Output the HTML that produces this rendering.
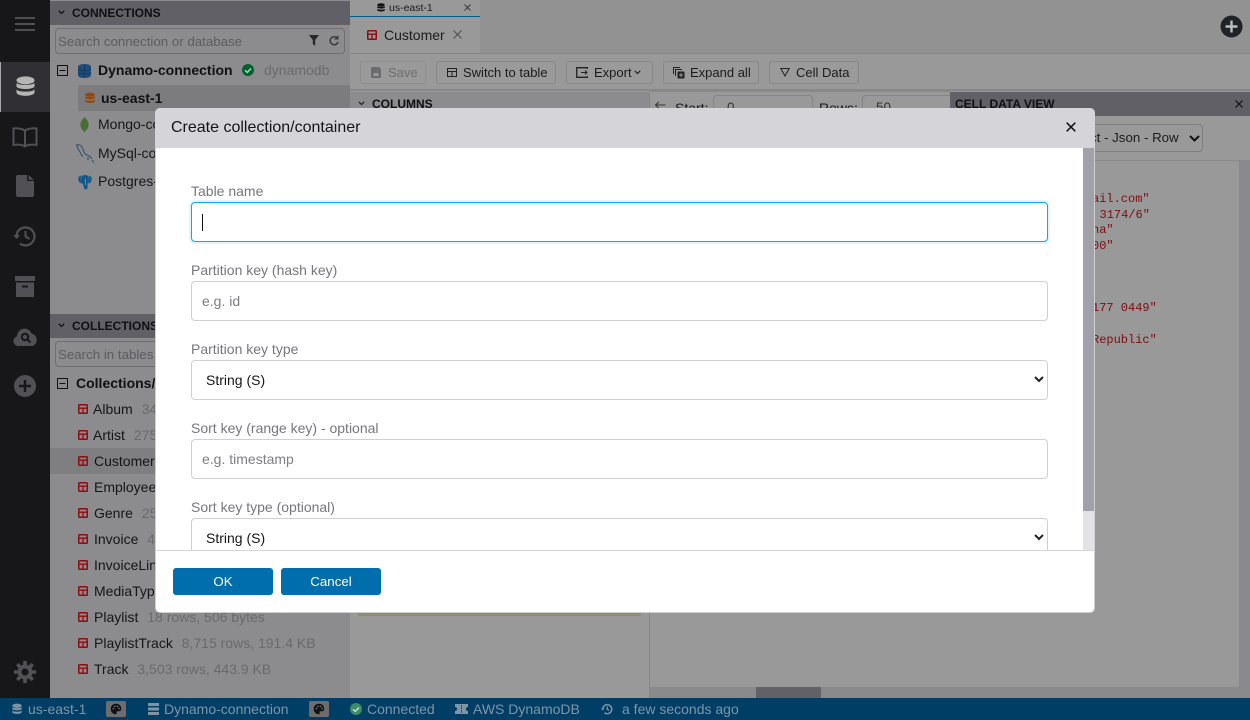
<!DOCTYPE html>
<html lang="en"><head><meta charset="utf-8"><title>Create collection</title>
<style>
html,body{margin:0;padding:0;width:1250px;height:720px;overflow:hidden;background:#999;font-family:"Liberation Sans",sans-serif;font-size:14px;color:#151518}
*{box-sizing:border-box}
.a,.t{position:absolute}
.t{white-space:nowrap;line-height:20px;height:20px}
svg{position:absolute;display:block}
.g{color:#6a696d;margin-left:5px}
.tb{position:absolute;height:23px;top:61px;border:1px solid #878789;border-radius:3px;background:#9a9a9a;font-size:13px;line-height:21px;color:#1b1b1e;white-space:nowrap}
.lb{position:absolute;left:191px;color:#77767e;font-size:14px;line-height:20px;white-space:nowrap}
.in{position:absolute;left:191px;width:857px;height:40px;border:1px solid #d0d0d3;border-radius:4px;background:#fff;color:#7d7d84;font-size:14px;line-height:38px;padding-left:10px}
.sel{color:#17171a;padding-left:14px}
.btn{position:absolute;top:568px;width:100px;height:27px;background:#006dac;border-radius:3px;color:#fff;font-size:13.300px;line-height:27px;text-align:center}
.sb{position:absolute;top:698px;height:22px;line-height:22px;color:#7f95a5;font-size:14px;white-space:nowrap}
.pal{position:absolute;top:701px;width:20px;height:16px;background:#6d6d70;border-radius:2px}
.m{position:absolute;font-family:"Liberation Mono",monospace;font-size:12px;line-height:16px;color:#7d0d12;white-space:nowrap;left:1092px}
</style></head><body>
<svg width="0" height="0" style="position:absolute"><defs>
<symbol id="tbl" viewBox="0 0 10 10"><rect x=".75" y=".75" width="8.500" height="8.500" rx=".8" fill="none" stroke="#8f0c12" stroke-width="1.500"/><path d="M.7 4.200h8.600M5 4.200v5" stroke="#8f0c12" stroke-width="1.300" fill="none"/></symbol>
<symbol id="db" viewBox="0 0 20 22"><ellipse cx="10" cy="4.500" rx="9.500" ry="4.200" fill="currentColor"/><path d="M.5 7.200C2 10 18 10 19.500 7.200V11C18 14.500 2 14.500.5 11zM.5 14C2 17.200 18 17.200 19.500 14V17.500C18 22 2 22 .5 17.500z" fill="currentColor"/></symbol>
<symbol id="pal" viewBox="0 0 16 16"><path d="M8 1C3.800 1 1 4 1 8s3 7 6.500 7c1.500 0 1.800-1 1.300-2-.5-1 0-2 1.200-2h2.500C14 11 15 9.500 15 7.500 15 3.500 12 1 8 1z" fill="#111"/><circle cx="4.500" cy="7.500" r="1.200" fill="#6d6d70"/><circle cx="6.500" cy="4.500" r="1.200" fill="#6d6d70"/><circle cx="10" cy="4.500" r="1.200" fill="#6d6d70"/><circle cx="12.300" cy="7.300" r="1.200" fill="#6d6d70"/></symbol>
</defs></svg>

<!-- left rail -->
<div class="a" style="left:0;top:0;width:50px;height:698px;background:#17171a"></div>
<div class="a" style="left:0;top:62px;width:50px;height:50px;background:#2f2f34;border-left:1px solid #a8a8aa"></div>
<svg style="left:15px;top:17px" width="20" height="15"><path d="M0 1h20M0 7h20M0 13h20" stroke="#505054" stroke-width="2"/></svg>
<svg style="left:16px;top:76px;color:#b5b5b3" width="19" height="21"><use href="#db"/></svg>
<svg style="left:12px;top:127px" width="26" height="21" viewBox="0 0 26 21"><path d="M13 3.500C10 1.500 5 1 1.500 1.500V18C5 17.500 10 17.500 13 19.500 16 17.500 21 17.500 24.500 18V1.500C21 1 16 1.500 13 3.500zM13 3.500V19.500" fill="none" stroke="#505055" stroke-width="2"/></svg>
<svg style="left:16px;top:175px" width="18" height="22" viewBox="0 0 18 22"><path d="M2 0h9v6h7v14a2 2 0 0 1-2 2H2a2 2 0 0 1-2-2V2a2 2 0 0 1 2-2zM12.500 0L18 4.800h-5.500z" fill="#505055"/></svg>
<svg style="left:13px;top:225px" width="24" height="22" viewBox="0 0 24 22"><path d="M3.500 11A9 9 0 1 1 7 18.500" fill="none" stroke="#505055" stroke-width="2.200"/><path d="M0 10l3.500 4 3.500-4z" fill="#505055"/><path d="M12.500 6v5.500l4 2.500" fill="none" stroke="#505055" stroke-width="2"/></svg>
<svg style="left:15px;top:276px" width="20" height="21" viewBox="0 0 20 21"><path d="M0 0h20v5H0zM1 6.500h18V21H1z" fill="#505055"/><path d="M7 10.500h6" stroke="#17171a" stroke-width="2"/></svg>
<svg style="left:13px;top:327px" width="25" height="20" viewBox="0 0 25 20"><path d="M5 19a5 5 0 0 1-1-9.800A7.500 7.500 0 0 1 18.500 6.500 6.500 6.500 0 0 1 19.500 19z" fill="#505055"/><circle cx="12" cy="10" r="3.200" fill="none" stroke="#17171a" stroke-width="2"/><path d="M14.500 12.500l3 3" stroke="#17171a" stroke-width="2"/></svg>
<svg style="left:14px;top:375px" width="22" height="22" viewBox="0 0 22 22"><circle cx="11" cy="11" r="11" fill="#505055"/><path d="M11 5v12M5 11h12" stroke="#17171a" stroke-width="2.400"/></svg>
<svg style="left:14px;top:661px" width="22" height="22" viewBox="0 0 22 22"><circle cx="11" cy="11" r="5.500" fill="none" stroke="#505055" stroke-width="4"/><path d="M11 0v4M11 18v4M0 11h4M18 11h4M3.200 3.200l3 3M15.800 15.800l3 3M18.800 3.200l-3 3M6.200 15.800l-3 3" stroke="#505055" stroke-width="3.600"/></svg>

<!-- left panel -->
<div class="a" style="left:50px;top:0;width:300px;height:698px;background:#8c8c8e"></div>
<div class="a" style="left:50px;top:1px;width:300px;height:24px;background:#616066"></div>
<svg style="left:58px;top:10px" width="7" height="5"><path d="M.8.800L3.500 3.500 6.200.800" fill="none" stroke="#111" stroke-width="1.300"/></svg>
<div class="t" style="left:72px;top:3px;font-size:12px;font-weight:700;color:#101013">CONNECTIONS</div>
<div class="a" style="left:55px;top:28px;width:290px;height:26px;border:1px solid #6f6f72;border-radius:4px"></div>
<div class="t" style="left:58px;top:32px;font-size:13.300px;color:#5d5c62">Search connection or database</div>
<svg style="left:309px;top:35px" width="10" height="11"><path d="M0 0h10L6.200 5V11L3.800 9V5z" fill="#27272a"/></svg>
<svg style="left:329px;top:35px" width="10" height="11" viewBox="0 0 10 11"><path d="M8.500 3.500A4 4 0 1 0 9 7" fill="none" stroke="#3a3a3d" stroke-width="1.500"/><path d="M9.500 0v4.500H5z" fill="#3a3a3d"/></svg>

<svg style="left:57px;top:65px" width="11" height="11"><rect x=".5" y=".5" width="10" height="10" fill="none" stroke="#111" /><path d="M2.500 5.500h6" stroke="#111"/></svg>
<svg style="left:78px;top:64px" width="13" height="14" viewBox="0 0 13 14"><path d="M6.500 0C10 0 13 1 13 3V11C13 13 10 14 6.500 14S0 13 0 11V3C0 1 3 0 6.500 0z" fill="#1f4c78"/><path d="M0 5C2 7 11 7 13 5M0 8.500C2 10.500 11 10.500 13 8.500M6.500 2V13" fill="none" stroke="#16365a" stroke-width=".8"/></svg>
<div class="t" style="left:98px;top:60px;font-weight:700;color:#111114">Dynamo-connection</div>
<svg style="left:242px;top:64px" width="12" height="12" viewBox="0 0 12 12"><circle cx="6" cy="6" r="6" fill="#05602f"/><path d="M3 6.200l2.200 2.200L9 4.500" fill="none" stroke="#9db" stroke-width="1.500"/></svg>
<div class="t g" style="left:264px;top:60px;margin-left:0">dynamodb</div>
<div class="a" style="left:78px;top:85px;width:272px;height:26px;background:#7c7c7e"></div>
<svg style="left:85px;top:92px;color:#974609" width="10" height="12"><use href="#db"/></svg>
<div class="t" style="left:101px;top:88px;font-weight:700;color:#111114">us-east-1</div>
<svg style="left:80px;top:117px" width="9" height="16" viewBox="0 0 9 16"><path d="M4.500 0C7.500 3 9 6 8.500 9 8 12 6 13.500 5 14.500L4.500 16 4 14.500C3 13.500 1 12 .5 9 0 6 1.500 3 4.500 0z" fill="#466f34"/></svg>
<div class="t" style="left:98px;top:114px;color:#17171a">Mongo-connection</div>
<svg style="left:75px;top:144px" width="20" height="19" viewBox="0 0 20 19"><path d="M1 1C3 .5 5.500 1 7 3 9 5.500 8 9 11 10.500 13 11.500 16 12 16.500 15M2 1.500C2 4 3 5 4.500 7 5.500 9 6 11 8 12.500M17 16l2 2.500M13 13v3" fill="none" stroke="#264d6d" stroke-width="1"/></svg>
<div class="t" style="left:98px;top:143px;color:#17171a">MySql-connection</div>
<svg style="left:78px;top:174px" width="14" height="16" viewBox="0 0 14 16"><path d="M7 1C10 1 11.500 3 11 6 10.800 8 10 9 9.500 10V14.500L7.500 15.500C6 15 5.500 13 5.500 11 4.500 10 3 8 3 6 2.500 3 4 1 7 1z" fill="#11598a"/><path d="M3.300 1.500C1.300 1.500 0 3.500 .3 5.500 .6 7.500 1.500 9 3.200 9.500 3.900 9.700 3.500 8 2.900 6.500 2.300 4.500 2.700 3 3.300 1.500zM10.700 1.500C12.700 1.500 14 3.500 13.700 5.500 13.400 7.500 12.500 9 10.800 9.500 10.100 9.700 10.500 8 11.100 6.500 11.700 4.500 11.300 3 10.700 1.500z" fill="#11598a"/><path d="M7.500 4.500V11" stroke="#8c8c8e" stroke-width=".8"/></svg>
<div class="t" style="left:98px;top:171px;color:#17171a">Postgres-connection</div>

<div class="a" style="left:50px;top:314px;width:300px;height:24px;background:#616066"></div>
<svg style="left:58px;top:323px" width="7" height="5"><path d="M.8.800L3.500 3.500 6.200.800" fill="none" stroke="#111" stroke-width="1.300"/></svg>
<div class="t" style="left:72px;top:316px;font-size:12px;font-weight:700;color:#101013">COLLECTIONS</div>
<div class="a" style="left:55px;top:341px;width:295px;height:26px;border:1px solid #6f6f72;border-radius:4px 0 0 4px"></div>
<div class="t" style="left:58px;top:345px;font-size:13.300px;color:#5d5c62">Search in tables</div>
<svg style="left:57px;top:378px" width="11" height="11"><rect x=".5" y=".5" width="10" height="10" fill="none" stroke="#111"/><path d="M2.500 5.500h6" stroke="#111"/></svg>
<div class="t" style="left:76px;top:373px;font-weight:700;color:#111114">Collections/containers</div>
<div class="a" style="left:50px;top:448px;width:300px;height:26px;background:#7f7f81"></div>
<svg style="left:78px;top:404px" width="10" height="10"><use href="#tbl"/></svg><div class="t" style="left:93px;top:399px">Album <span class="g">347 rows</span></div>
<svg style="left:78px;top:430px" width="10" height="10"><use href="#tbl"/></svg><div class="t" style="left:93px;top:425px">Artist <span class="g">275 rows</span></div>
<svg style="left:78px;top:456px" width="10" height="10"><use href="#tbl"/></svg><div class="t" style="left:94px;top:451px">Customer</div>
<svg style="left:78px;top:482px" width="10" height="10"><use href="#tbl"/></svg><div class="t" style="left:94px;top:477px">Employee</div>
<svg style="left:78px;top:508px" width="10" height="10"><use href="#tbl"/></svg><div class="t" style="left:94px;top:503px">Genre <span class="g">25 rows</span></div>
<svg style="left:78px;top:534px" width="10" height="10"><use href="#tbl"/></svg><div class="t" style="left:94px;top:529px">Invoice <span class="g">412 rows</span></div>
<svg style="left:78px;top:560px" width="10" height="10"><use href="#tbl"/></svg><div class="t" style="left:94px;top:555px">InvoiceLine</div>
<svg style="left:78px;top:586px" width="10" height="10"><use href="#tbl"/></svg><div class="t" style="left:94px;top:581px">MediaType</div>
<svg style="left:78px;top:612px" width="10" height="10"><use href="#tbl"/></svg><div class="t" style="left:94px;top:607px">Playlist <span class="g">18 rows, 506 bytes</span></div>
<svg style="left:78px;top:638px" width="10" height="10"><use href="#tbl"/></svg><div class="t" style="left:94px;top:633px">PlaylistTrack <span class="g">8,715 rows, 191.4 KB</span></div>
<svg style="left:78px;top:664px" width="10" height="10"><use href="#tbl"/></svg><div class="t" style="left:94px;top:659px">Track <span class="g">3,503 rows, 443.9 KB</span></div>

<!-- main area -->
<div class="a" style="left:350px;top:0;width:900px;height:54px;background:#929292;border-bottom:1px solid #858587"></div>
<div class="a" style="left:350px;top:0;width:130px;height:17px;background:#999;border-bottom:1px solid #045c8e"></div>
<svg style="left:377px;top:3px;color:#111" width="8" height="9"><use href="#db"/></svg>
<div class="t" style="left:389px;top:-2px;font-size:10.500px;color:#1b1b1e">us-east-1</div>
<svg style="left:464px;top:4px" width="7" height="7"><path d="M.5.500l6 6M6.500.500l-6 6" stroke="#333" stroke-width=".9"/></svg>
<div class="a" style="left:350px;top:17px;width:130px;height:36px;background:#999"></div>
<svg style="left:367px;top:30px" width="10" height="10"><use href="#tbl"/></svg>
<div class="t" style="left:384px;top:25px;color:#1b1b1e">Customer</div>
<svg style="left:453px;top:30px" width="9" height="9"><path d="M.5.500l8 8M8.500.500l-8 8" stroke="#4a4a4d" stroke-width="1"/></svg>
<svg style="left:1220px;top:15px" width="23" height="23" viewBox="0 0 23 23"><circle cx="11.500" cy="11.500" r="11" fill="#1f2226"/><path d="M11.500 5.500v12M5.500 11.500h12" stroke="#bbb" stroke-width="2.400"/></svg>

<div class="a" style="left:350px;top:54px;width:900px;height:37px;background:#999;border-bottom:2px solid #878789"></div>
<div class="tb" style="left:360px;width:66px;padding-left:27px;color:#6f6f72;border-color:#8d8d8f">Save</div>
<svg style="left:371px;top:67px" width="10" height="11"><path d="M0 1a1 1 0 0 1 1-1h7l2 2v8a1 1 0 0 1-1 1H1a1 1 0 0 1-1-1z" fill="#6b6b6e"/><rect x="2.500" y="6" width="5" height="3" fill="#999"/></svg>
<div class="tb" style="left:436px;width:120px;padding-left:26px">Switch to table</div>
<svg style="left:447px;top:68px" width="10" height="9"><rect x=".5" y=".5" width="9" height="8" fill="none" stroke="#222"/><path d="M.5 3.500h9M5 3v5" stroke="#222"/></svg>
<div class="tb" style="left:566px;width:87px;padding-left:27px">Export</div>
<svg style="left:576px;top:67px" width="12" height="11"><path d="M11.500 2V.7H.7v9.600h10.800V9" fill="none" stroke="#222" stroke-width="1.300"/><path d="M5 5.500h6M9 3.500l2 2-2 2" fill="none" stroke="#222"/></svg>
<svg style="left:634px;top:70px" width="7" height="5"><path d="M.8.800L3.500 3.500 6.200.800" fill="none" stroke="#222" stroke-width="1.200"/></svg>
<div class="tb" style="left:663px;width:96px;padding-left:26px">Expand all</div>
<svg style="left:673px;top:67px" width="12" height="12"><path d="M.5 7V.5H7M2.500 9V2.500H9" fill="none" stroke="#222"/><rect x="4.500" y="4.500" width="7" height="7" rx="1" fill="#222"/><path d="M8 6v4M6 8h4" stroke="#999"/></svg>
<div class="tb" style="left:769px;width:90px;padding-left:26px">Cell Data</div>
<svg style="left:780px;top:68px" width="10" height="9"><path d="M.8.500h8.400L5 8z" fill="none" stroke="#222"/></svg>

<div class="a" style="left:350px;top:92px;width:300px;height:24px;background:#8c8c8e"></div>
<svg style="left:358px;top:101px" width="7" height="5"><path d="M.8.800L3.500 3.500 6.200.800" fill="none" stroke="#222" stroke-width="1.200"/></svg>
<div class="t" style="left:372px;top:94px;font-size:12px;font-weight:700;color:#101013">COLUMNS</div>
<div class="a" style="left:649px;top:92px;width:1px;height:606px;background:#858587"></div>
<div class="a" style="left:650px;top:90px;width:300px;height:2px;background:#888"></div>
<svg style="left:654px;top:101px" width="12" height="8"><path d="M11.500 4H1.500M5 .8L1.500 4 5 7.200" fill="none" stroke="#333" stroke-width="1"/></svg>
<div class="t" style="left:675px;top:98px;color:#1b1b1e">Start:</div>
<div class="a" style="left:713px;top:95px;width:100px;height:30px;border:1px solid #858587;border-radius:4px;padding:4px 13px;font-size:13.500px;color:#333">0</div>
<div class="t" style="left:819px;top:98px;color:#1b1b1e">Rows:</div>
<div class="a" style="left:862px;top:95px;width:88px;height:30px;border:1px solid #858587;border-right:0;border-radius:4px 0 0 4px;padding:4px 13px;font-size:13.500px;color:#333">50</div>
<div class="a" style="left:650px;top:687px;width:600px;height:11px;background:#8a8a8c"></div>
<div class="a" style="left:756px;top:687px;width:65px;height:11px;background:#626167"></div>
<div class="a" style="left:358px;top:612px;width:283px;height:4px;background:#8e8c6e;border-radius:0 0 2px 2px"></div>

<!-- cell data -->
<div class="a" style="left:950px;top:92px;width:300px;height:24px;background:#616066"></div>
<div class="t" style="left:955px;top:94px;font-size:12px;font-weight:700;color:#101013">CELL DATA VIEW</div>
<svg style="left:1235px;top:100px" width="8" height="8"><path d="M.5.500l7 7M7.500.500l-7 7" stroke="#111" stroke-width="1.200"/></svg>
<div class="a" style="left:1090px;top:124px;width:113px;height:28px;border:1px solid #7f7f81;border-radius:4px"></div>
<div class="t" style="left:1090px;top:128px;font-size:13.300px;color:#1b1b1e">ct - Json - Row</div>
<svg style="left:1189px;top:135px" width="11" height="7"><path d="M1 1l4.500 4.500L10 1" fill="none" stroke="#111" stroke-width="2"/></svg>
<div class="a" style="left:950px;top:160px;width:300px;height:1px;background:#8a8a8c"></div>
<div class="a" style="left:1239px;top:161px;width:11px;height:537px;background:#8a8a8c"></div>
<div class="m" style="top:191px">ail.com"</div>
<div class="m" style="top:207px;left:1099.500px">3174/6"</div>
<div class="m" style="top:222px">na"</div>
<div class="m" style="top:238px">00"</div>
<div class="m" style="top:300px">177 0449"</div>
<div class="m" style="top:332px">Republic"</div>

<!-- status bar -->
<div class="a" style="left:0;top:698px;width:1250px;height:22px;background:#003e66"></div>
<svg style="left:12px;top:703px;color:#7f95a5" width="10" height="12"><use href="#db"/></svg>
<div class="sb" style="left:28px">us-east-1</div>
<div class="pal" style="left:106px"></div>
<svg style="left:110px;top:703px" width="12" height="12"><use href="#pal"/></svg>
<svg style="left:148px;top:703px" width="11" height="12"><path d="M0 0h11v3H0zM0 4.500h11v3H0zM0 9h11v3H0z" fill="#7f95a5"/></svg>
<div class="sb" style="left:164px">Dynamo-connection</div>
<div class="pal" style="left:309px"></div>
<svg style="left:313px;top:703px" width="12" height="12"><use href="#pal"/></svg>
<svg style="left:350px;top:703px" width="12" height="12" viewBox="0 0 12 12"><circle cx="6" cy="6" r="6" fill="#3d8c63"/><path d="M3 6.200l2.200 2.200L9 4.500" fill="none" stroke="#cde" stroke-width="1.400"/></svg>
<div class="sb" style="left:367px">Connected</div>
<svg style="left:455px;top:704px" width="13" height="10"><path d="M0 0h13v3a2 2 0 0 0 0 4v3H0V7a2 2 0 0 0 0-4z" fill="#7f95a5"/><path d="M6.500 1v8" stroke="#003e66" stroke-dasharray="1.500 1"/></svg>
<div class="sb" style="left:473px">AWS DynamoDB</div>
<svg style="left:601px;top:703px" width="12" height="12" viewBox="0 0 24 22"><path d="M3.500 11A9 9 0 1 1 7 18.500" fill="none" stroke="#7f95a5" stroke-width="3"/><path d="M0 10l3.500 4 3.500-4z" fill="#7f95a5"/><path d="M12.500 6v5.500l4 2.500" fill="none" stroke="#7f95a5" stroke-width="2.600"/></svg>
<div class="sb" style="left:622px">a few seconds ago</div>

<!-- modal -->
<div class="a" style="left:155px;top:108px;width:940px;height:505px;background:#fff;border-radius:5px;overflow:hidden;border:1px solid #cfcfd2;border-top:0"></div>
<div class="a" style="left:155px;top:108px;width:940px;height:40px;background:#d5d4d9;border-radius:5px 5px 0 0"></div>
<div class="t" style="left:171px;top:118px;font-size:16px;color:#151518">Create collection/container</div>
<svg style="left:1066px;top:122px" width="10" height="10"><path d="M.7.700l8.600 8.600M9.300.700L.7 9.300" stroke="#111" stroke-width="1.500"/></svg>
<div class="a" style="left:1083px;top:148px;width:11px;height:402px;background:#e3e3e6"></div>
<div class="a" style="left:1083px;top:148px;width:11px;height:363px;background:#a1a1aa"></div>
<div class="lb" style="top:181px">Table name</div>
<div class="in" style="top:202px;border:1px solid #0aa8ec;box-shadow:0 0 0 2px #e3f4fd"></div>
<div class="a" style="left:202px;top:214px;width:1px;height:17px;background:#111"></div>
<div class="lb" style="top:260px">Partition key (hash key)</div>
<div class="in" style="top:281px">e.g. id</div>
<div class="lb" style="top:339px">Partition key type</div>
<div class="in sel" style="top:360px">String (S)</div>
<svg style="left:1034px;top:376px" width="10" height="7"><path d="M1 1l4 4 4-4" fill="none" stroke="#222" stroke-width="2"/></svg>
<div class="lb" style="top:418px">Sort key (range key) - optional</div>
<div class="in" style="top:439px">e.g. timestamp</div>
<div class="lb" style="top:497px">Sort key type (optional)</div>
<div class="a" style="left:191px;top:518px;width:857px;height:32px;overflow:hidden"><div class="in sel" style="left:0;top:0;">String (S)</div></div>
<svg style="left:1034px;top:534px" width="10" height="7"><path d="M1 1l4 4 4-4" fill="none" stroke="#222" stroke-width="2"/></svg>
<div class="a" style="left:155px;top:550px;width:940px;height:1px;background:#d5d5d8"></div>
<div class="btn" style="left:173px">OK</div>
<div class="btn" style="left:281px">Cancel</div>
</body></html>
